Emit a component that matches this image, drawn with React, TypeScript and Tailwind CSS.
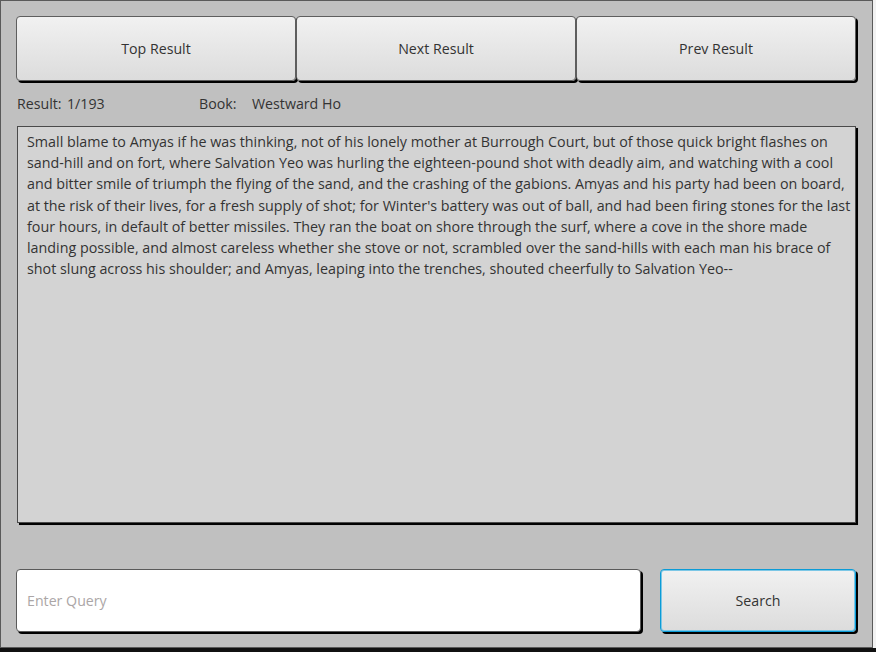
import React from "react";

const lines = [
  "Small blame to Amyas if he was thinking, not of his lonely mother at Burrough Court, but of those quick bright flashes on",
  "sand-hill and on fort, where Salvation Yeo was hurling the eighteen-pound shot with deadly aim, and watching with a cool",
  "and bitter smile of triumph the flying of the sand, and the crashing of the gabions. Amyas and his party had been on board,",
  "at the risk of their lives, for a fresh supply of shot; for Winter's battery was out of ball, and had been firing stones for the last",
  "four hours, in default of better missiles. They ran the boat on shore through the surf, where a cove in the shore made",
  "landing possible, and almost careless whether she stove or not, scrambled over the sand-hills with each man his brace of",
  "shot slung across his shoulder; and Amyas, leaping into the trenches, shouted cheerfully to Salvation Yeo--",
];

function Btn({ label }: { label: string }) {
  return (
    <button className="h-[65px] pt-[1px] rounded-[4px] border border-[#5e5e5e] bg-gradient-to-b from-[#f1f1f1] to-[#dcdcdc] text-[14.2px] text-[#333] shadow-[2px_2px_0.5px_#000] [font-family:'Open_Sans',sans-serif]">
      {label}
    </button>
  );
}

export default function App() {
  return (
    <div className="w-[876px] h-[652px] bg-[#111] flex flex-col overflow-hidden [font-family:'Open_Sans',sans-serif]">
      <div className="flex h-[648px]">
        <div className="w-[873px] h-[648px] border border-[#5a5a5a] bg-[#c0c0c0] p-[15px] flex flex-col">
          <div className="grid grid-cols-3 w-[840px]">
            <Btn label="Top Result" />
            <Btn label="Next Result" />
            <Btn label="Prev Result" />
          </div>
          <div className="h-[45px] flex items-center pl-[1px] pt-[1px] text-[14.2px] text-[#333]">
            <span className="w-[50px]">Result:</span>
            <span className="w-[132px]">1/193</span>
            <span className="w-[53px]">Book:</span>
            <span>Westward Ho</span>
          </div>
          <div className="ml-[1px] w-[839px] h-[397px] bg-[#d3d3d3] border border-[#4a4a4a] shadow-[2px_2px_0.5px_#000] pl-[9px] pt-[4px] text-[14.3px] leading-[21.2px] text-[#333]">
            {lines.map((l, i) => (
              <div key={i} className="whitespace-nowrap">{l}</div>
            ))}
          </div>
          <div className="flex-1" />
          <div className="flex h-[63px] gap-[19px]">
            <div className="w-[625px] h-[63px] rounded-[4px] bg-white border border-[#5a5a5a] shadow-[2px_2px_0.5px_#000] flex items-center pl-[10px] pt-[1px] text-[14.2px] text-[#aba6a6]">
              Enter Query
            </div>
            <button className="w-[196px] h-[63px] pt-[1px] rounded-[4px] border border-[#0b9bd6] bg-gradient-to-b from-[#f1f1f1] to-[#dcdcdc] text-[14.2px] text-[#333] shadow-[inset_0_0_0_1px_#7cc7e6,2px_2px_0.5px_#000]">
              Search
            </button>
          </div>
        </div>
        <div className="flex-1 bg-[#f2f2f2]" />
      </div>
      <div className="flex-1 bg-[#111]" />
    </div>
  );
}
